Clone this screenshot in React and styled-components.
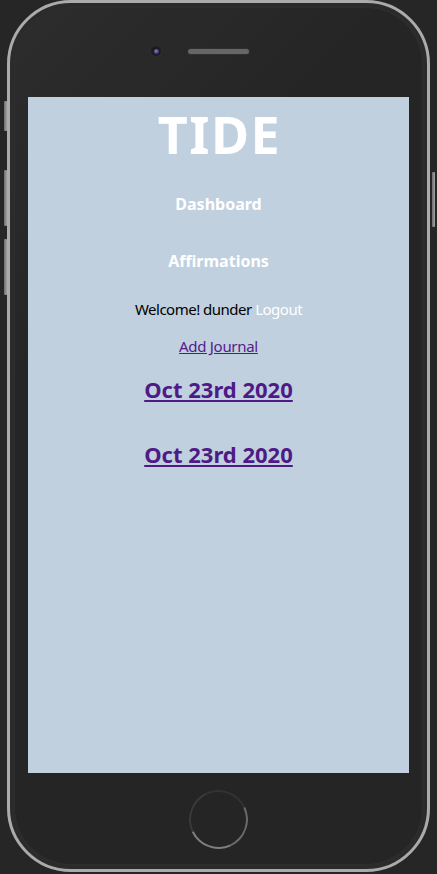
import React from 'react';
import styled, { createGlobalStyle } from 'styled-components';

const GlobalStyle = createGlobalStyle`
  html, body {
    margin: 0;
    padding: 0;
    background: #262626;
  }
  body {
    font-family: "Noto Sans", "Open Sans", sans-serif;
  }
`;

const Stage = styled.div`
  width: 437px;
  height: 874px;
  display: flex;
  justify-content: center;
  background: #262626;
`;

const Phone = styled.div`
  position: relative;
  width: 417px;
  height: 866px;
  border: 3px solid #ababab;
  border-radius: 64px;
  background: linear-gradient(135deg, #2d2d2d 0%, #252525 30%, #252525 100%);
  box-shadow: inset 0 0 0 4px #2b2b2b, inset 0 0 0 5px #2e2e2e;
  display: flex;
  flex-direction: column;
  align-items: center;
`;

const SideButton = styled.div`
  position: absolute;
  width: 3px;
  border-radius: 1px;
  background: linear-gradient(90deg, #6e6e6e, #a3a3a3);
  ${({ $side }) => ($side === 'right' ? 'right: -8px;' : 'left: -6px;')}
  top: ${({ $top }) => $top}px;
  height: ${({ $h }) => $h}px;
`;

const TopBar = styled.div`
  height: 94px;
  display: flex;
  align-items: flex-start;
  justify-content: center;
  gap: 27px;
  padding-top: 40px;
  box-sizing: border-box;
`;

const Camera = styled.div`
  width: 10px;
  height: 10px;
  margin-top: 3px;
  border-radius: 50%;
  background: #1b1b22;
  box-shadow: 0 0 0 1px #2e2e2e;
  display: flex;
  align-items: center;
  justify-content: center;

  &::after {
    content: '';
    width: 5px;
    height: 5px;
    border-radius: 50%;
    background: radial-gradient(circle at 40% 40%, #8a7fc0, #3b3166 70%);
  }
`;

const Speaker = styled.div`
  width: 61px;
  height: 5px;
  margin-top: 6px;
  border-radius: 3px;
  background-color: #3a3a3a;
  background-image: radial-gradient(circle, #666 0.8px, transparent 1px);
  background-size: 2px 2px;
  box-shadow: 0 0 0 1px #2f2f2f;
`;

const Spacer = styled.div`
  width: 10px;
`;

const Screen = styled.main`
  width: 381px;
  height: 676px;
  background: #c0d0df;
  display: flex;
  flex-direction: column;
  align-items: center;
  text-align: center;
  padding-top: 7px;
  box-sizing: border-box;
`;

const Title = styled.h1`
  margin: 0;
  font-size: 52px;
  line-height: 60px;
  font-weight: 700;
  letter-spacing: 1.5px;
  padding-left: 2px;
  color: #fff;
`;

const NavItem = styled.h3`
  margin: ${({ $mt }) => $mt}px 0 0;
  font-size: 16px;
  line-height: 20px;
  font-weight: 700;
  color: #fff;
`;

const Welcome = styled.p`
  margin: 28px 0 0;
  font-size: 15px;
  line-height: 20px;
  letter-spacing: -0.5px;
  color: #000;
`;

const LogoutLink = styled.a`
  color: #fff;
  text-decoration: none;
  cursor: pointer;
`;

const AddLink = styled.a`
  display: block;
  margin-top: 17px;
  font-size: 15px;
  line-height: 20px;
  letter-spacing: -0.3px;
  color: #551a8b;
  text-decoration: underline;
`;

const EntryTitle = styled.h2`
  margin: ${({ $mt }) => $mt}px 0 0;
  font-size: 22px;
  line-height: 28px;
  font-weight: 700;

  a {
    color: #4e1a86;
    text-decoration: underline;
  }
`;

const BottomBar = styled.div`
  flex: 1;
  display: flex;
  align-items: center;
  justify-content: center;
  padding-bottom: 4px;
`;

const HomeButton = styled.div`
  width: 55px;
  height: 55px;
  border-radius: 50%;
  border: 2px solid;
  border-color: #333 #6a6a6a #7e7e7e #3a3a3a;
  transform: rotate(20deg);
`;

const entries = [
  { id: 1, date: 'Oct 23rd 2020' },
  { id: 2, date: 'Oct 23rd 2020' },
];

const App = () => {
  return (
    <Stage>
      <GlobalStyle />
      <Phone>
        <SideButton $top={98} $h={30} />
        <SideButton $top={167} $h={56} />
        <SideButton $top={236} $h={56} />
        <SideButton $side="right" $top={169} $h={55} />
        <TopBar>
          <Camera />
          <Speaker />
          <Spacer />
        </TopBar>
        <Screen>
          <Title>TIDE</Title>
          <NavItem $mt={30}>Dashboard</NavItem>
          <NavItem $mt={37}>Affirmations</NavItem>
          <Welcome>
            Welcome! dunder <LogoutLink>Logout</LogoutLink>
          </Welcome>
          <AddLink href="#">Add Journal</AddLink>
          {entries.map((entry, i) => (
            <EntryTitle key={entry.id} $mt={i === 0 ? 19 : 37}>
              <a href="#">{entry.date}</a>
            </EntryTitle>
          ))}
        </Screen>
        <BottomBar>
          <HomeButton />
        </BottomBar>
      </Phone>
    </Stage>
  );
};

export default App;
